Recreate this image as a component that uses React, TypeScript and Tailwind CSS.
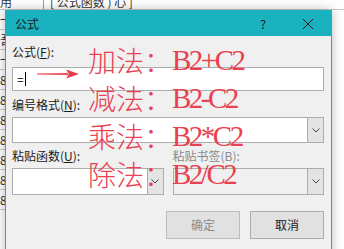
import React from 'react'

const ui = { fontFamily: '"Noto Sans CJK SC", "Noto Sans", sans-serif' }
const red = { fontFamily: '"Liberation Serif", "Noto Sans CJK SC", serif' }

const NOTES = [
  { op: '加法：', expr: 'B2+C2' },
  { op: '减法：', expr: 'B2-C2' },
  { op: '乘法：', expr: 'B2*C2' },
  { op: '除法：', expr: 'B2/C2' },
]

function Chevron() {
  return (
    <svg width="8" height="5" viewBox="0 0 8 5" fill="none">
      <path d="M0.5 0.5 L4 4 L7.5 0.5" stroke="#444" strokeWidth="1" />
    </svg>
  )
}

function Select({ disabled, h }: { disabled?: boolean; h: string }) {
  return (
    <div className={`flex border border-[#adadad] ${h} ${disabled ? 'bg-[#f0f0f0]' : 'bg-white'}`}>
      <div className="flex-1" />
      <div className="w-[16px] flex items-center justify-center bg-[#e3e3e3] border-l border-[#adadad]">
        <Chevron />
      </div>
    </div>
  )
}

function Label({ children, dim }: { children: React.ReactNode; dim?: boolean }) {
  return (
    <div className={`h-[16px] leading-[16px] text-[12px] ${dim ? 'text-[#8a8a8a]' : 'text-[#1a1a1a]'}`}>
      {children}
    </div>
  )
}

export default function App() {
  return (
    <div className="relative w-[344px] h-[249px] overflow-hidden bg-white" style={ui}>
      {/* sheet behind the dialog */}
      <div className="h-[10px] border-b border-[#c8c8c8] flex items-start text-[12px] leading-[12px] text-[#333] overflow-hidden">
        <span className="w-[43px] -mt-[4px]">用</span>
        <span className="pl-[6px] -mt-[4px] border-l border-[#999] h-[14px]">[ 公式函数 ) 心 ]</span>
      </div>
      <div className="w-[5px] text-[12px] leading-[19px] text-[#333] overflow-hidden">
        <div className="border-b border-[#c8c8c8]">一</div>
        <div className="border-b border-[#c8c8c8]">吾</div>
        <div className="border-b border-[#c8c8c8]">一</div>
        <div className="border-b border-[#c8c8c8]">8</div>
        <div className="border-b border-[#c8c8c8]">8</div>
        <div className="border-b border-[#c8c8c8]">8</div>
        <div className="border-b border-[#c8c8c8]">8</div>
        <div className="border-b border-[#c8c8c8]">8</div>
        <div className="border-b border-[#c8c8c8]">8</div>
        <div className="border-b border-[#c8c8c8]">8</div>
      </div>

      {/* dialog window */}
      <div className="absolute left-[5px] top-[10px] w-[327px] h-[260px] border border-[#1bb2c0] bg-[#f0f0f0] shadow-[0_0_10px_rgba(0,0,0,0.28)]">
        <div className="h-[25px] bg-[#1bb2c0] flex items-center pl-[9px] text-[12px] text-[#1a1a1a]">
          <span className="flex-1">公式</span>
          <span className="w-[14px] text-center mr-[32px] text-[12px]">?</span>
          <svg width="12" height="12" viewBox="0 0 12 12" className="mr-[17px]">
            <path d="M1 1 L11 11 M11 1 L1 11" stroke="#1a1a1a" strokeWidth="1" />
          </svg>
        </div>

        <div className="pl-[6px] pr-[7px] pt-[8px]">
          <Label>公式(<u>F</u>):</Label>
          <div className="mt-[7px] h-[24px] bg-white border border-[#adadad] flex items-center pl-[4px] text-[12px] text-black">
            =<span className="w-[1px] h-[14px] bg-black ml-[1px]" />
          </div>

          <div className="mt-[6px]">
            <Label>编号格式(<u>N</u>):</Label>
          </div>
          <div className="mt-[4px]">
            <Select h="h-[26px]" />
          </div>

          <div className="mt-[5px] grid grid-cols-2 gap-x-[9px]">
            <Label>粘贴函数(<u>U</u>):</Label>
            <Label dim>粘贴书签(B):</Label>
          </div>
          <div className="mt-[4px] grid grid-cols-2 gap-x-[9px]">
            <Select h="h-[27px]" />
            <Select h="h-[27px]" disabled />
          </div>

          <div className="mt-[16px] flex justify-end gap-[10px]">
            <div className="w-[74px] h-[28px] flex items-center justify-center bg-[#e1e1e1] border border-[#bcbcbc] text-[12px] text-[#8a8a8a]">
              确定
            </div>
            <div className="w-[74px] h-[28px] flex items-center justify-center bg-[#e1e1e1] border border-[#adadad] text-[12px] text-[#1a1a1a]">
              取消
            </div>
          </div>
        </div>
      </div>

      {/* red annotations */}
      <svg className="absolute left-[36px] top-[69px]" width="44" height="10" viewBox="0 0 44 10">
        <path d="M1 5 L32 4.3 L32 5.7 Z" fill="#e8394a" stroke="#e8394a" strokeWidth="0.6" />
        <path d="M30 0.5 L43 5 L30 9.5 L33 5 Z" fill="#e8394a" />
      </svg>
      <div className="absolute left-[88px] top-[41px] text-[#ea4050]" style={red}>
        {NOTES.map(n => (
          <div key={n.op} className="h-[38px] flex items-center whitespace-nowrap">
            <span className="text-[28px] leading-[38px] w-[84px] font-light" style={ui}>{n.op}</span>
            <span className="text-[29px] leading-[38px] tracking-[-2.5px]">{n.expr}</span>
          </div>
        ))}
      </div>
    </div>
  )
}
